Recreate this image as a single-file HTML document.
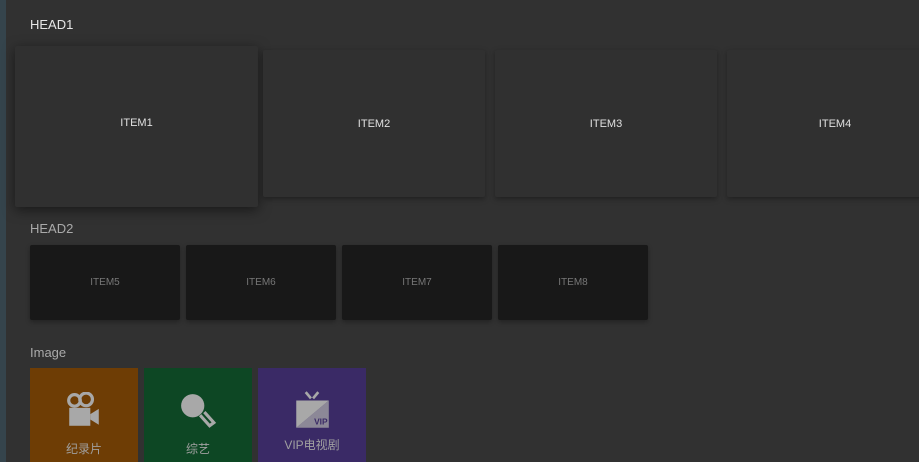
<!DOCTYPE html>
<html><head><meta charset="utf-8"><style>
*{margin:0;padding:0;box-sizing:border-box}
body{width:919px;height:462px;overflow:hidden;background:#313131;position:relative;font-family:"Liberation Sans","Noto Sans CJK SC",sans-serif}
.strip{position:absolute;left:0;top:0;width:6px;height:462px;background:#35444c}
.h{position:absolute;color:#e6e6e6;font-size:13px}
.c{position:absolute;display:flex;align-items:center;justify-content:center;font-size:11px;color:#e0e0e0;border-radius:2px}
.a{background:#303030;box-shadow:0 2px 6px rgba(0,0,0,.35)}
.b{background:#181818;color:#777;font-size:10px;box-shadow:0 2px 5px rgba(0,0,0,.3)}
.t{position:absolute;top:368px;width:108px;height:94px;display:flex;flex-direction:column;align-items:center;color:#a0a0a0;font-size:12px}
.t svg{margin-top:24px}
.t span{position:absolute;top:72px}
</style></head><body>
<div class="strip"></div>
<div class="h" style="left:30px;top:17px">HEAD1</div>
<div class="c a" style="left:15px;top:46px;width:243px;height:161px;padding-bottom:8px;box-shadow:0 3px 12px rgba(0,0,0,.5)">ITEM1</div>
<div class="c a" style="left:263px;top:50px;width:222px;height:147px">ITEM2</div>
<div class="c a" style="left:495px;top:50px;width:222px;height:147px">ITEM3</div>
<div class="c a" style="left:727px;top:50px;width:216px;height:147px">ITEM4</div>
<div class="h" style="left:30px;top:221px;color:#aaa">HEAD2</div>
<div class="c b" style="left:30px;top:245px;width:150px;height:75px">ITEM5</div>
<div class="c b" style="left:186px;top:245px;width:150px;height:75px">ITEM6</div>
<div class="c b" style="left:342px;top:245px;width:150px;height:75px">ITEM7</div>
<div class="c b" style="left:498px;top:245px;width:150px;height:75px">ITEM8</div>
<div class="h" style="left:30px;top:345px;color:#aaa">Image</div>
<div class="t" style="left:30px;background:#6e3d05">
<svg width="36" height="38" viewBox="0 0 34 36"><circle cx="8" cy="8" r="5.5" fill="none" stroke="#a8a8a8" stroke-width="3"/><circle cx="19" cy="7" r="6" fill="none" stroke="#a8a8a8" stroke-width="3"/><rect x="3" y="15" width="20" height="17" fill="#a8a8a8"/><path d="M23 21 L31 16 L31 31 L23 26Z" fill="#a8a8a8"/></svg>
<span>纪录片</span></div>
<div class="t" style="left:144px;background:#0d4724">
<svg width="38" height="38" viewBox="0 0 36 36"><circle cx="13" cy="13" r="11" fill="#a8a8a8"/><path d="M20 22 L29 32 L33 29 L24 19" fill="none" stroke="#a8a8a8" stroke-width="3"/></svg>
<span>综艺</span></div>
<div class="t" style="left:258px;background:#3a2a66">
<svg width="38" height="42" viewBox="0 0 36 40" style="margin-top:22px"><path d="M12 2 L17 8 M24 2 L19 8" stroke="#a8a8a8" stroke-width="2.5"/><path d="M3 10 H34 L3 36Z" fill="#a8a8a8"/><path d="M34 10 V36 H3Z" fill="#a8a8a8" opacity=".75"/><text x="20" y="33" font-size="8" font-weight="bold" fill="#3a2a66" font-family="Liberation Sans,sans-serif">VIP</text></svg>
<span style="top:68px">VIP电视剧</span></div>
</body></html>
